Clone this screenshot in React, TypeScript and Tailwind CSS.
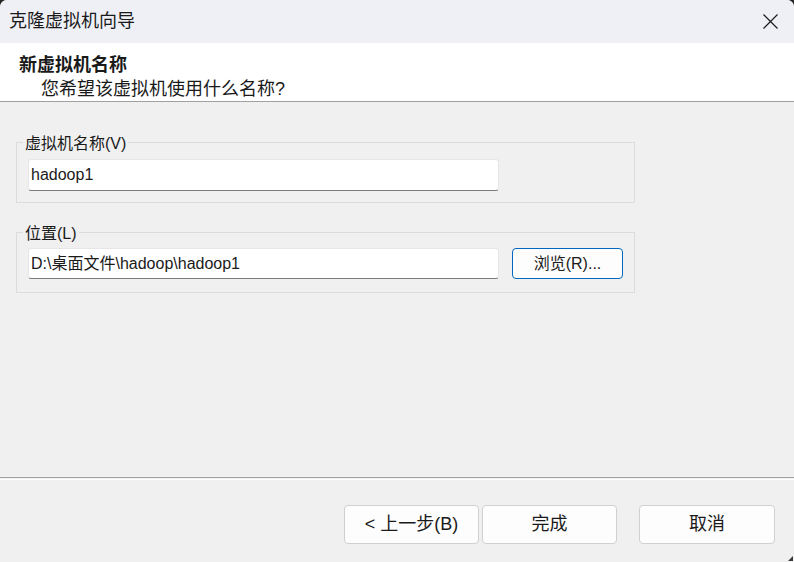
import React from "react";

const font = { fontFamily: '"Liberation Sans", "Noto Sans CJK SC", sans-serif' };

function GroupBox({ label, children, className = "" }: { label: string; children: React.ReactNode; className?: string }) {
  return (
    <fieldset className={`w-[619px] border border-[#dcdcdc] ${className}`}>
      <legend className="ml-[6px] px-[2px] pt-[4px] text-[16px] leading-[20px] text-[#1a1a1a]">{label}</legend>
      {children}
    </fieldset>
  );
}

function TextBox({ value }: { value: string }) {
  return (
    <div className="flex w-[471px] items-center rounded-[3px] border border-[#e6e6e6] border-b-[#7a7a7a] bg-white pl-[2px] text-[16px] text-[#1a1a1a]">
      {value}
    </div>
  );
}

function FooterButton({ children, className = "" }: { children: React.ReactNode; className?: string }) {
  return (
    <button className={`h-[39px] rounded-[4px] border border-[#d0d0d0] bg-[#fdfdfd] text-[18px] text-[#1a1a1a] ${className}`}>
      {children}
    </button>
  );
}

export default function App() {
  return (
    <div className="relative h-[562px] w-[794px] bg-[#262626]" style={font}>
      <div className="flex h-full flex-col overflow-hidden rounded-t-[7px] bg-[#f0f0f0]">
        {/* Title bar */}
        <div className="flex h-[43px] shrink-0 items-center justify-between bg-[#eff0f6] pl-[9px] pr-[16px]">
          <span className="text-[18px] text-[#1a1a1a]">克隆虚拟机向导</span>
          <svg width="15" height="15" viewBox="0 0 15 15" className="text-[#1a1a1a]">
            <path d="M0.5 0.5L14.5 14.5M14.5 0.5L0.5 14.5" stroke="currentColor" strokeWidth="1.2" />
          </svg>
        </div>

        {/* Header */}
        <div className="h-[59px] shrink-0 border-b border-[#a0a0a0] bg-white pt-[10px] text-[18px] leading-[24px] text-[#1a1a1a]">
          <div className="pl-[19px] font-bold">新虚拟机名称</div>
          <div className="pl-[41px]">您希望该虚拟机使用什么名称?</div>
        </div>

        {/* Body */}
        <div className="flex-1 px-[16px] pt-[28px]">
          <GroupBox label="虚拟机名称(V)">
            <div className="flex pb-[11px] pl-[11px] pt-[5px]">
              <div className="flex h-[32px]">
                <TextBox value="hadoop1" />
              </div>
            </div>
          </GroupBox>

          <GroupBox label="位置(L)" className="mt-[17px]">
            <div className="flex h-[48px] items-start pb-[13px] pl-[11px] pt-[4px]">
              <div className="flex h-[31px]">
                <TextBox value="D:\桌面文件\hadoop\hadoop1" />
              </div>
              <button className="ml-[13px] h-[31px] w-[111px] rounded-[4px] border border-[#0067c0] bg-[#fdfdfd] text-[16px] text-[#1a1a1a]">
                浏览(R)...
              </button>
            </div>
          </GroupBox>
        </div>

        {/* Footer */}
        <div className="h-[85px] shrink-0 border-t border-[#a0a0a0]">
          <div className="mt-[1px] border-t border-white" />
          <div className="flex justify-end pr-[19px] pt-[25px]">
            <FooterButton className="w-[135px]">&lt; 上一步(B)</FooterButton>
            <FooterButton className="ml-[3px] w-[135px]">完成</FooterButton>
            <FooterButton className="ml-[22px] w-[136px]">取消</FooterButton>
          </div>
        </div>
      </div>

      {/* Resize grip */}
      <svg width="5" height="5" viewBox="0 0 5 5" className="absolute bottom-[1px] right-[1px]">
        <path d="M5 0L5 5L0 5Z" fill="#3a3a3a" />
      </svg>
    </div>
  );
}
